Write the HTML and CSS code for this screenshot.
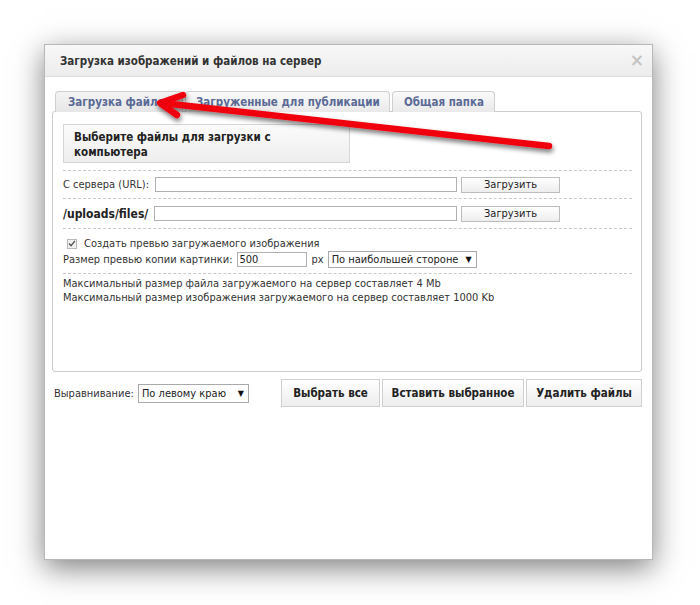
FILE: index.html
```html
<!DOCTYPE html>
<html lang="ru">
<head>
<meta charset="utf-8">
<title>Загрузка изображений и файлов на сервер</title>
<link rel="stylesheet" href="styles.css">
</head>
<body>
<div class="page">
  <div class="dialog">
    <div class="dlg-head">
      <span class="dlg-title">Загрузка изображений и файлов на сервер</span>
      <span class="dlg-close">×</span>
    </div>
    <div class="dlg-body">
      <div class="tabs">
        <div class="tab tab-active">Загрузка файлов</div>
        <div class="tab tab-2">Загруженные для публикации</div>
        <div class="tab tab-3">Общая папка</div>
      </div>
      <div class="panel">
        <div class="pick-box">Выберите файлы для загрузки с компьютера</div>
        <div class="sep sep-first"></div>
        <div class="row">
          <span class="lbl">С сервера (URL):</span>
          <span class="field"></span>
          <span class="btn-small">Загрузить</span>
        </div>
        <div class="sep"></div>
        <div class="row row-2">
          <span class="lbl lbl-bold">/uploads/files/</span>
          <span class="field"></span>
          <span class="btn-small">Загрузить</span>
        </div>
        <div class="sep"></div>
        <div class="opts">
          <div class="opt-line">
            <span class="check"><svg width="9" height="9" viewBox="0 0 9 9"><path d="M1.2 4.6 L3.4 7 L7.8 1.6" fill="none" stroke="#555" stroke-width="1.6"/></svg></span>
            <span>Создать превью загружаемого изображения</span>
          </div>
          <div class="opt-line opt-size">
            <span>Размер превью копии картинки:</span>
            <span class="num-field">500</span>
            <span class="px">px</span>
            <span class="select sel-side">По наибольшей стороне<span class="caret">▼</span></span>
          </div>
        </div>
        <div class="sep"></div>
        <div class="info">
          <div>Максимальный размер файла загружаемого на сервер составляет 4 Mb</div>
          <div>Максимальный размер изображения загружаемого на сервер составляет 1000 Kb</div>
        </div>
      </div>
      <div class="footer">
        <div class="align">
          <span>Выравнивание:</span>
          <span class="select sel-align">По левому краю<span class="caret">▼</span></span>
        </div>
        <div class="actions">
          <span class="btn btn-all">Выбрать все</span>
          <span class="btn btn-insert">Вставить выбранное</span>
          <span class="btn btn-del">Удалить файлы</span>
        </div>
      </div>
    </div>
  </div>
  <svg class="arrow" width="700" height="605" viewBox="0 0 700 605">
    <defs>
      <filter id="sh" x="-10%" y="-50%" width="120%" height="200%">
        <feGaussianBlur in="SourceAlpha" stdDeviation="2.5"/>
        <feOffset dx="1" dy="3" result="b"/>
        <feComponentTransfer><feFuncA type="linear" slope="0.55"/></feComponentTransfer>
        <feMerge><feMergeNode/><feMergeNode in="SourceGraphic"/></feMerge>
      </filter>
    </defs>
    <g filter="url(#sh)" fill="none" stroke="#f00010" stroke-width="6.5" stroke-linecap="round" stroke-linejoin="round">
      <path d="M549 146 L162 103"/>
      <path d="M183 95 L160 103 L177 115"/>
    </g>
  </svg>
</div>
</body>
</html>
```

FILE: styles.css
```css
html, body {
  margin: 0;
  padding: 0;
  background: #ffffff;
}

body {
  font-family: "DejaVu Sans Condensed", "Liberation Sans", sans-serif;
  font-size: 11px;
  color: #333;
}

.page {
  position: relative;
  width: 700px;
  height: 605px;
  padding: 44px 0 0 44px;
  box-sizing: border-box;
  overflow: hidden;
}

.dialog {
  width: 609px;
  height: 516px;
  box-sizing: border-box;
  border: 1px solid #b8b8b8;
  background: #fff;
  box-shadow: 0 8px 28px rgba(0, 0, 0, 0.5);
}

.dlg-head {
  height: 31px;
  border-bottom: 1px solid #dcdcdc;
  background: linear-gradient(#f8f8f8, #ececec);
  display: flex;
  align-items: center;
  justify-content: space-between;
  padding: 0 8px 0 15px;
}

.dlg-title {
  font-weight: bold;
  font-size: 11.5px;
  color: #333;
  padding-top: 1px;
}

.dlg-close {
  color: #c4c4c4;
  font-size: 17px;
  font-weight: bold;
  font-family: "DejaVu Sans", sans-serif;
  line-height: 1;
}

.dlg-body {
  padding: 14px 10px 0 7px;
}

.tabs {
  display: flex;
  gap: 2px;
  margin-left: 3px;
  height: 20px;
}

.tab {
  box-sizing: border-box;
  height: 21px;
  padding: 0 0 0 12px;
  border: 1px solid #cfcfcf;
  border-bottom: none;
  border-radius: 4px 4px 0 0;
  background: linear-gradient(#fafafa, #e9e9e9);
  color: #5a6a96;
  font-weight: bold;
  font-size: 11.5px;
  display: flex;
  align-items: center;
  white-space: nowrap;
  overflow: hidden;
}

.tab-active {
  width: 128px;
  background: linear-gradient(#f4f4f4, #e6e6e6);
}

.tab-2 {
  width: 205px;
  padding-left: 10px;
}

.tab-3 {
  width: 103px;
  padding-left: 11px;
}

.panel {
  box-sizing: border-box;
  height: 261px;
  border: 1px solid #cccccc;
  border-radius: 3px;
  background: #fff;
  padding: 12px 9px 0 10px;
}

.pick-box {
  box-sizing: border-box;
  width: 287px;
  height: 39px;
  padding: 5px 30px 0 10px;
  border: 1px solid #d6d6d6;
  background: linear-gradient(#fbfbfb, #eeeeee);
  font-weight: bold;
  font-size: 11.5px;
  color: #222;
  line-height: 15px;
}

.sep {
  border-top: 1px dashed #c8c8c8;
}

.sep-first {
  margin-top: 7px;
}

.row {
  display: flex;
  align-items: center;
  gap: 4px;
  height: 27px;
  margin-right: 72px;
}

.row-2 {
  height: 29px;
}

.lbl {
  white-space: nowrap;
}

.lbl-bold {
  font-weight: bold;
  font-size: 12px;
  color: #222;
}

.field {
  flex: 1;
  height: 15px;
  box-sizing: border-box;
  border: 1px solid #b0b0b0;
  background: #fff;
  margin-left: 2px;
}

.btn-small {
  box-sizing: border-box;
  width: 99px;
  height: 16px;
  border: 1px solid #bdbdbd;
  background: linear-gradient(#ffffff, #ededed);
  color: #222;
  text-align: center;
  line-height: 14px;
}

.opts {
  padding: 7px 0 6px 0;
}

.opt-line {
  display: flex;
  align-items: center;
  height: 15px;
  white-space: nowrap;
}

.opt-size {
  height: 16px;
}

.check {
  width: 10px;
  height: 10px;
  box-sizing: border-box;
  border: 1px solid #b8b8b8;
  background: #f0f0f0;
  margin: 0 7px 0 4px;
  display: flex;
  align-items: center;
  justify-content: center;
}

.num-field {
  box-sizing: border-box;
  width: 70px;
  height: 15px;
  margin-left: 4px;
  border: 1px solid #b0b0b0;
  padding-left: 2px;
  line-height: 13px;
  color: #222;
}

.px {
  margin: 0 4px 0 5px;
}

.select {
  box-sizing: border-box;
  height: 17px;
  border: 1px solid #a9a9a9;
  background: #fff;
  display: flex;
  align-items: center;
  justify-content: space-between;
  padding: 0 4px 0 3px;
  color: #222;
  white-space: nowrap;
}

.caret {
  font-size: 8px;
  color: #111;
  font-family: "DejaVu Sans", sans-serif;
}

.sel-side {
  width: 149px;
}

.info {
  padding-top: 3px;
  line-height: 14px;
}

.footer {
  display: flex;
  align-items: center;
  justify-content: space-between;
  margin-top: 7px;
}

.align {
  display: flex;
  align-items: center;
  gap: 4px;
  margin-left: 2px;
}

.sel-align {
  width: 111px;
  height: 19px;
}

.actions {
  display: flex;
  gap: 2px;
}

.btn {
  box-sizing: border-box;
  height: 28px;
  padding: 0;
  border: 1px solid #cfcfcf;
  background: linear-gradient(#ffffff, #ededed);
  font-weight: bold;
  font-size: 11.5px;
  color: #222;
  display: flex;
  align-items: center;
  justify-content: center;
  white-space: nowrap;
}

.btn-all { width: 99px; }
.btn-insert { width: 142px; }
.btn-del { width: 116px; }

.arrow {
  position: absolute;
  left: 0;
  top: 0;
  pointer-events: none;
}
```
